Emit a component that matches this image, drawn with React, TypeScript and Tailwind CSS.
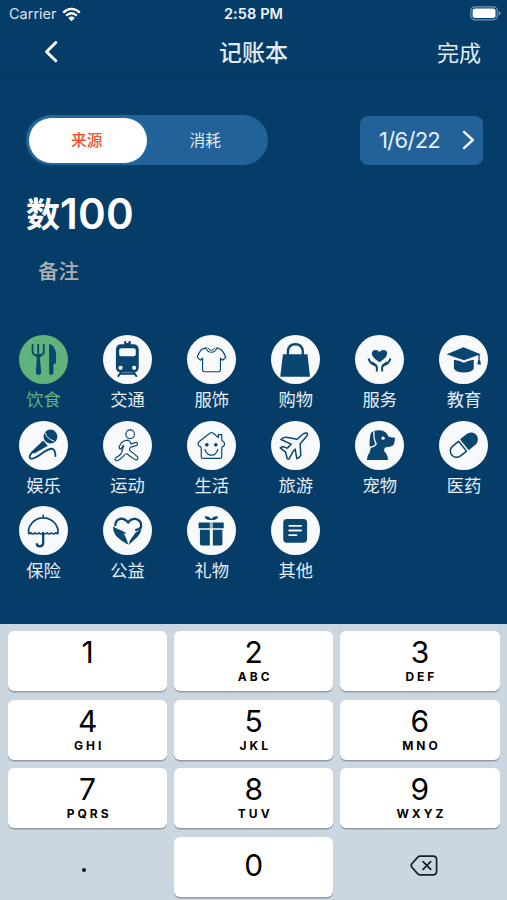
import { useState } from "react";
import type { ReactNode } from "react";
import clsx from "clsx";

type Category = {
  id: string;
  name: string;
  icon: ReactNode;
};

// Icons are drawn on a 148x148 grid, the size of the round badge
const line = { fill: "none", stroke: "currentColor", strokeLinecap: "round", strokeLinejoin: "round" } as const;

const categories: Category[] = [
  {
    id: "food",
    name: "饮食",
    icon: (
      <>
        <path {...line} strokeWidth="5.500" d="M41 30V50Q41 60 51 61H65Q75 60 75 50V30M58 29V62" />
        <path d="M46 58H70Q70 65 63 69L67 112Q67 121 59 121T51 112L54 69Q46 65 46 58Z" />
        <path d="M91 27Q110 30 112 60V85L104 88V114Q104 121 97 121Q91 121 91 114Z" />
      </>
    ),
  },
  {
    id: "transport",
    name: "交通",
    icon: (
      <>
        <path d="M64 30V20Q64 18 67 18H70V24H77V18H81Q84 18 84 20V30Z" />
        <path d="M53 28H94Q108 30 108 46V98Q107 111 94 113H53Q40 111 39 98V46Q39 30 53 28Z" />
        <rect x="49" y="40" width="50" height="24" rx="6" fill="#f7f9fb" />
        <circle cx="53" cy="99" r="6.500" fill="#f7f9fb" />
        <circle cx="94" cy="99" r="6.500" fill="#f7f9fb" />
        <path {...line} strokeWidth="6" strokeLinecap="butt" d="M55 111L45 126M92 111L102 126M51 117H96" />
      </>
    ),
  },
  {
    id: "clothes",
    name: "服饰",
    icon: (
      <>
        <path {...line} strokeWidth="3.500" d="M57 39Q47 42 43 45Q36 52 31 67Q36 73 41 76L47 70V106Q47 111 52 111H96Q101 111 101 106V70L107 76Q113 72 117 67Q111 52 105 46Q99 41 90 39Q86 52 73.500 52T57 39Z" />
        <path {...line} strokeWidth="3" d="M63 39Q66 46 73.500 46T84 39" />
      </>
    ),
  },
  {
    id: "shopping",
    name: "购物",
    icon: (
      <>
        <path {...line} strokeWidth="7" d="M51 62V49Q53 28 73.500 28T96 49V62" />
        <path d="M36 58H110L118 126H28Z" />
      </>
    ),
  },
  {
    id: "service",
    name: "服务",
    icon: (
      <>
        <path d="M74 82Q51 68 51 56Q51 45 62 45Q70 45 74 51Q78 45 86 45Q97 45 97 56Q97 68 74 82Z" />
        <path {...line} strokeWidth="6" strokeLinecap="butt" d="M41 71Q45 86 58 90Q66 92 66 99V110M107 71Q103 86 90 90Q82 92 82 99V110" />
        <path {...line} strokeWidth="4" d="M53 82L64 91M95 82L84 91" />
      </>
    ),
  },
  {
    id: "education",
    name: "教育",
    icon: (
      <>
        <path d="M23 58L74 37Q100 48 126 58L76 76Q50 68 23 58Z" />
        <path d="M45 75Q60 77 75 84Q90 77 105 75V102Q99 113 75 113T45 102Z" />
        <path {...line} strokeWidth="4" d="M121 60V80" />
        <path d="M118 76H124L127 89H116Z" />
      </>
    ),
  },
  {
    id: "fun",
    name: "娱乐",
    icon: (
      <>
        <circle cx="95" cy="47" r="21" />
        <path stroke="#f7f9fb" strokeWidth="3" fill="none" d="M79 35Q83 53 106 61" />
        <path d="M73 59L87 75L45 99L38 92Z" />
        <path {...line} strokeWidth="5.500" d="M40 94Q28 108 34 113Q43 117 69 98Q91 82 101 84Q110 88 110 106" />
      </>
    ),
  },
  {
    id: "sport",
    name: "运动",
    icon: (
      <>
        <circle {...line} strokeWidth="3.500" cx="82" cy="40" r="13" />
        <path {...line} strokeWidth="3.500" d="M76 58Q83 61 84 69L101 64Q107 67 102 74L84 79Q80 81 80 88L103 107Q108 112 102 117Q98 120 72 99Q67 98 62 106Q50 118 42 120Q33 117 38 111Q53 104 56 96L62 76Q62 71 59 77L54 85Q48 84 49 77Q57 58 76 58Z" />
      </>
    ),
  },
  {
    id: "life",
    name: "生活",
    icon: (
      <>
        <path {...line} strokeWidth="3.500" d="M74 35Q70 35 65 40L37 62Q30 69 37 76Q43 77 43 82V108Q43 113 48 113H99Q105 113 105 108V82Q105 77 111 76Q116 69 111 63L105 58V41H95V50L83 40Q78 35 74 35Z" />
        <circle cx="60" cy="72" r="5.500" />
        <circle cx="87" cy="72" r="5.500" />
        <path {...line} strokeWidth="3.500" d="M54 86Q60 103 74 103T93 86" />
      </>
    ),
  },
  {
    id: "travel",
    name: "旅游",
    icon: (
      <path {...line} strokeWidth="4.500" d="M110 37Q104 34 96 40L79 55L46 49Q38 48 30 56L61 70L49 82L35 77L28 81L44 94L49 114L54 115L66 93L73 85L78 114Q86 111 90 103L88 69L106 48Q112 41 110 37Z" />
    ),
  },
  {
    id: "pet",
    name: "宠物",
    icon: (
      <>
        <path d="M51 33Q63 25 82 29Q96 34 101 47Q110 51 120 50Q122 62 117 72Q110 79 93 79Q86 82 89 93Q99 101 100 118H36Q36 105 45 94L48 78Z" />
        <path d="M50 34Q44 40 44 76Q56 78 62 70Q55 61 55 33Z" />
        <path stroke="#f7f9fb" strokeWidth="4" fill="none" d="M57 31Q56 57 64 69Q58 79 43 80" />
        <circle cx="85" cy="52" r="5" fill="#f7f9fb" />
      </>
    ),
  },
  {
    id: "medicine",
    name: "医药",
    icon: (
      <g transform="rotate(-39 75 73)">
        <path {...line} strokeWidth="4.500" d="M70 54H47A19 19 0 0 0 47 92H70Z" />
        <path d="M77 52H103A21 21 0 0 1 103 94H77Z" />
      </g>
    ),
  },
  {
    id: "insurance",
    name: "保险",
    icon: (
      <>
        <path {...line} strokeWidth="5" d="M73 34V28M30 84Q25 70 38 53Q52 36 73 36T109 53Q121 69 117 84L111 81Q104 88 98 81Q92 88 85 81Q79 88 73 81Q67 88 60 81Q54 88 48 81Q41 88 36 81Z" />
        <path {...line} strokeWidth="7" d="M73 82V111Q73 122 62 122Q54 122 54 115" />
      </>
    ),
  },
  {
    id: "charity",
    name: "公益",
    icon: (
      <>
        <path {...line} strokeWidth="7" d="M37 58Q38 41 54 38Q67 38 76 50Q84 38 98 39Q117 43 115 62Q112 72 100 72" />
        <path d="M30 62Q44 70 55 74Q64 82 69 96L77 117Q48 101 38 88Q30 77 30 62Z" />
        <path d="M117 68Q113 87 98 99Q87 109 77 118Q79 103 90 92L99 79Q109 76 117 68Z" />
        <path {...line} strokeWidth="4" d="M55 76L67 82" />
      </>
    ),
  },
  {
    id: "gift",
    name: "礼物",
    icon: (
      <>
        <path d="M73 42Q56 45 53 32Q66 29 73 39Q80 29 94 32Q91 45 73 42Z" />
        <path d="M38 50H69V67H35V53Q35 50 38 50ZM78 50H108Q111 50 111 53V67H78ZM39 72H69V119H44Q39 119 39 114ZM78 72H107V114Q107 119 102 119H78Z" />
        <path d="M69 50H78V67H69Z" opacity="0.35" />
      </>
    ),
  },
  {
    id: "other",
    name: "其他",
    icon: (
      <>
        <rect x="37" y="39" width="72" height="72" rx="11" />
        <path stroke="#f7f9fb" strokeWidth="5.500" strokeLinecap="round" d="M55 60H91M55 74H91M55 88H77" />
      </>
    ),
  },
];

const keys = [
  { digit: "1", letters: "" },
  { digit: "2", letters: "ABC" },
  { digit: "3", letters: "DEF" },
  { digit: "4", letters: "GHI" },
  { digit: "5", letters: "JKL" },
  { digit: "6", letters: "MNO" },
  { digit: "7", letters: "PQRS" },
  { digit: "8", letters: "TUV" },
  { digit: "9", letters: "WXYZ" },
];

const keyClass =
  "flex h-[60px] flex-col items-center rounded-[6px] bg-white text-black shadow-[0_1.5px_0_#929ca5]";

const StatusBar = () => (
  <div className="flex h-[27px] items-center justify-between pr-[6px] pl-[9px] text-white">
    <div className="flex w-24 items-center gap-[5px] pt-px text-[14.500px] text-[#d7e3ed]">
      <span>Carrier</span>
      <svg width="19" height="15" viewBox="0 0 19 15" fill="none" stroke="white" strokeWidth="2.300">
        <path d="M1.200 5.700Q9.500 -2 17.800 5.700M4.200 8.700Q9.500 3.900 14.800 8.700" />
        <path d="M6.200 10.900Q9.500 8 12.800 10.900L9.500 14.300Z" fill="white" stroke="none" />
      </svg>
    </div>
    <span className="-ml-[3px] text-[14.500px] font-semibold tracking-[0.1px] text-[#f0f5f9]">2:58 PM</span>
    <div className="flex w-24 justify-end">
      <svg width="31" height="15" viewBox="0 0 31 15">
        <rect x="0.800" y="0.800" width="26.500" height="13" rx="4" fill="none" stroke="#7895af" strokeWidth="1.200" />
        <rect x="2.600" y="2.600" width="22.900" height="9.400" rx="2.500" fill="white" />
        <path d="M28.700 5Q30.500 5.500 30.500 7.300T28.700 9.600Z" fill="#7895af" />
      </svg>
    </div>
  </div>
);

const App = () => {
  const [tab, setTab] = useState("income");
  const [activeCategory, setActiveCategory] = useState("food");

  return (
    <div className="flex h-[900px] w-full flex-col overflow-hidden bg-[#063d68] font-['Inter','Noto_Sans_CJK_SC',sans-serif]">
      <StatusBar />

      {/* Navigation */}
      <header className="grid h-[52px] grid-cols-3 items-center border-b border-[#05365f] pr-[26px] pl-[43px] text-[22px] text-[#e4ebf1]">
        <button className="pb-[2px]">
          <svg width="15" height="23" viewBox="0 0 15 23" fill="none" stroke="white" strokeWidth="3" strokeLinecap="round" strokeLinejoin="round">
            <path d="M12.800 2.500L3.500 11.700L12.800 20.800" />
          </svg>
        </button>
        <h1 className="-ml-[17px] pt-px text-center text-[23px] font-medium">记账本</h1>
        <button className="pt-px text-right">完成</button>
      </header>

      <main className="h-[545px]">
        <div className="flex items-center justify-between pt-[36px] pr-[24px] pl-[26px]">
          <div className="flex h-[50px] w-[242px] rounded-full bg-[#236299] p-[2.500px] text-[15.700px] text-[#dfe9f2]">
            {[
              { id: "income", name: "来源" },
              { id: "expense", name: "消耗" },
            ].map((item) => (
              <button
                key={item.id}
                className={clsx(
                  "flex-1 rounded-full pt-[2px] pr-[2px]",
                  tab === item.id && "bg-white font-medium text-[#f0532f] shadow-[0_0_5px_#2474a5]"
                )}
                onClick={() => setTab(item.id)}
              >
                {item.name}
              </button>
            ))}
          </div>
          <button className="flex h-[49px] w-[123px] items-center justify-between rounded-[8px] bg-[#236299] pr-[8px] pl-[19px] text-[22px] text-[#e8f1f8]">
            <span className="tracking-[-0.700px]">1/6/22</span>
            <svg width="13" height="20" viewBox="0 0 13 20" fill="none" stroke="currentColor" strokeWidth="2.500" strokeLinecap="round" strokeLinejoin="round">
              <path d="M2 1.800L10.800 10L2 18.200" />
            </svg>
          </button>
        </div>

        {/* Amount and note */}
        <div className="mt-[23px] flex h-[50px] items-center pl-[26px] text-white">
          <span className="pt-[2px] text-[34px] font-bold">数</span>
          <span className="text-[42px] font-semibold tracking-[0.300px]">100</span>
        </div>
        <div className="mt-[19px] flex h-[30px] items-center pl-[38px] text-[20.500px] font-medium text-[#aeb2b5]">备注</div>

        {/* Categories */}
        <div className="mr-[1px] ml-[1.500px] grid auto-rows-[85.600px] grid-cols-6 pt-[48px]">
          {categories.map((category) => (
            <button
              key={category.id}
              className={clsx(
                "flex flex-col items-center",
                activeCategory === category.id ? "text-[#62b27c]" : "text-[#e6edf3]"
              )}
              onClick={() => setActiveCategory(category.id)}
            >
              <svg
                viewBox="0 0 148 148"
                fill="currentColor"
                className={clsx(
                  "size-[49px] shrink-0 rounded-full text-[#0a4670]",
                  activeCategory === category.id ? "bg-[#62b27c]" : "bg-[#f7f9fb]"
                )}
              >
                {category.icon}
              </svg>
              <span className="mt-[3px] text-[17.300px] leading-[26px]">{category.name}</span>
            </button>
          ))}
        </div>
      </main>

      {/* Number pad */}
      <div className="grid flex-1 auto-rows-[60px] grid-cols-3 gap-x-[7px] gap-y-[8.600px] bg-[#cad6e0] pr-[7.500px] pl-[8px] pt-[7px]">
        {keys.map((key) => (
          <button key={key.digit} className={keyClass}>
            <span className="mt-[2px] text-[30px] leading-[38px]">{key.digit}</span>
            <span className="mt-px mr-[-3px] text-[12px] leading-[10px] font-bold tracking-[3px]">{key.letters}</span>
          </button>
        ))}
        <button className="flex items-center justify-center pt-[6px] pr-[8px]">
          <span className="size-[4px] rounded-full bg-[#101820]" />
        </button>
        <button className={clsx(keyClass, "justify-center pb-[3px] text-[30px]")}>0</button>
        <button className="flex items-center justify-center pb-[3px] pl-[8px] text-[#15202b]">
          <svg width="28" height="21" viewBox="0 0 29 22" fill="none" stroke="currentColor" strokeWidth="1.800" strokeLinecap="round" strokeLinejoin="round">
            <path d="M10.500 1.200H24Q27.700 1.200 27.700 5V17Q27.700 20.800 24 20.800H10.500Q9 20.800 8 19.800L1.800 12.800Q0.500 11 1.800 9.200L8 2.200Q9 1.200 10.500 1.200Z" />
            <path d="M13.500 7L21.500 15M21.500 7L13.500 15" />
          </svg>
        </button>
      </div>
    </div>
  );
};

export default App;
